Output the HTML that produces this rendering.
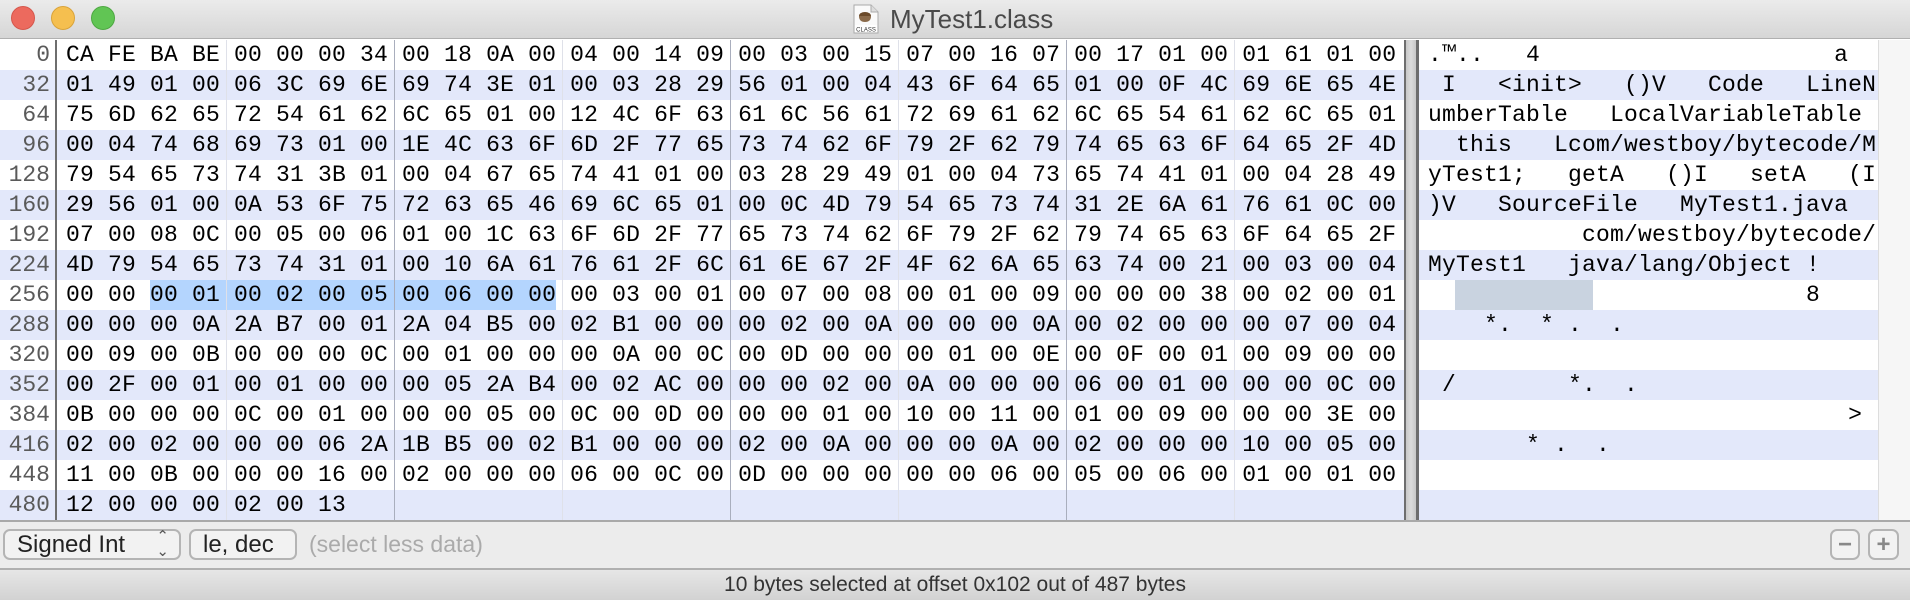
<!DOCTYPE html>
<html><head><meta charset="utf-8">
<style>
*{margin:0;padding:0;box-sizing:border-box}
html,body{width:1910px;height:600px;overflow:hidden;background:#fff;font-family:"Liberation Sans",sans-serif}
#title{position:absolute;left:0;top:0;width:1910px;height:39px;background:linear-gradient(#ebebeb,#d6d6d6);border-bottom:1px solid #b0b0b0}
.tl{position:absolute;top:6px;width:24px;height:24px;border-radius:50%}
#ttext{position:absolute;left:890px;top:4px;font-size:26px;color:#4a4a4a}
.row{position:absolute;left:0;width:1880px;height:30px}
.alt{background:#e3e8fa}
.ln{position:absolute;left:0;width:50px;text-align:right;font-family:"Liberation Mono",monospace;font-size:23px;color:#5a5a5a;line-height:30px}
.hx,.tx{position:absolute;font-family:"Liberation Mono",monospace;font-size:23px;letter-spacing:0.2px;line-height:30px;color:#000;white-space:pre}
.hx{left:66px}
.tx{left:1428px}
.sep{position:absolute;top:40px;height:480px;width:1px;background:#dfe1e9}
.sep.d{background:#a9aebd}
#gutb{position:absolute;left:55px;top:40px;width:2px;height:480px;background:#6e6e6e}
#split{position:absolute;left:1404px;top:40px;width:15px;height:480px;background:linear-gradient(90deg,#6e6e6e 0,#6e6e6e 2px,#c8c8c8 2px,#dcdcdc 7px,#c8c8c8 12px,#6e6e6e 12px,#6e6e6e 15px)}
#rstrip{position:absolute;left:1878px;top:40px;width:32px;height:480px;background:#f6f6f6;border-left:1px solid #ddd}
#ctl{position:absolute;left:0;top:520px;width:1910px;height:48px;background:#ececec;border-top:2px solid #a9a9a9}
#status{position:absolute;left:0;top:568px;width:1910px;height:32px;background:linear-gradient(#e6e6e6,#d2d2d2);border-top:2px solid #b0b0b0;text-align:center;font-size:21px;color:#333;line-height:30px}
.btn{position:absolute;top:7px;height:31px;border:2px solid #b4b4b4;border-radius:7px;background:#f2f2f2;font-size:24px;color:#222;line-height:27px;padding-left:12px}
</style></head><body>
<div id="title">
<div class="tl" style="left:11px;background:#ec6a5e;border:1px solid #d5574c"></div>
<div class="tl" style="left:51px;background:#f5bf4f;border:1px solid #d9a33a"></div>
<div class="tl" style="left:91px;background:#61c554;border:1px solid #4ea842"></div>
<svg style="position:absolute;left:853px;top:4px" width="26" height="30" viewBox="0 0 26 30"><path d="M1 1h17l7 7v21H1z" fill="#fafafa" stroke="#aaa"/><path d="M18 1v7h7" fill="#ddd" stroke="#aaa"/><ellipse cx="12" cy="12" rx="6" ry="4" fill="#6b4a2a"/><path d="M6 12q0 6 6 6t6-6" fill="#8a6a4a"/><rect x="2" y="21" width="22" height="7" fill="#fff"/><text x="13" y="27.5" font-size="6" text-anchor="middle" font-family="Liberation Sans" fill="#333">CLASS</text></svg>
<div id="ttext">MyTest1.class</div>
</div>

<div class="row" style="top:40px"><div class="ln">0</div></div>
<div class="row alt" style="top:70px"><div class="ln">32</div></div>
<div class="row" style="top:100px"><div class="ln">64</div></div>
<div class="row alt" style="top:130px"><div class="ln">96</div></div>
<div class="row" style="top:160px"><div class="ln">128</div></div>
<div class="row alt" style="top:190px"><div class="ln">160</div></div>
<div class="row" style="top:220px"><div class="ln">192</div></div>
<div class="row alt" style="top:250px"><div class="ln">224</div></div>
<div class="row" style="top:280px"><div class="ln">256</div></div>
<div class="row alt" style="top:310px"><div class="ln">288</div></div>
<div class="row" style="top:340px"><div class="ln">320</div></div>
<div class="row alt" style="top:370px"><div class="ln">352</div></div>
<div class="row" style="top:400px"><div class="ln">384</div></div>
<div class="row alt" style="top:430px"><div class="ln">416</div></div>
<div class="row" style="top:460px"><div class="ln">448</div></div>
<div class="row alt" style="top:490px"><div class="ln">480</div></div>

<div style="position:absolute;left:150px;top:280px;width:406px;height:30px;background:#b4d5fe"></div>
<div style="position:absolute;left:1455px;top:280px;width:138px;height:30px;background:#c9d3e0"></div>

<div class="sep" style="left:226px"></div>
<div class="sep d" style="left:394px"></div>
<div class="sep" style="left:562px"></div>
<div class="sep d" style="left:730px"></div>
<div class="sep" style="left:898px"></div>
<div class="sep d" style="left:1066px"></div>
<div class="sep" style="left:1234px"></div>

<div class="hx" style="top:40px">CA FE BA BE 00 00 00 34 00 18 0A 00 04 00 14 09 00 03 00 15 07 00 16 07 00 17 01 00 01 61 01 00</div>
<div class="hx" style="top:70px">01 49 01 00 06 3C 69 6E 69 74 3E 01 00 03 28 29 56 01 00 04 43 6F 64 65 01 00 0F 4C 69 6E 65 4E</div>
<div class="hx" style="top:100px">75 6D 62 65 72 54 61 62 6C 65 01 00 12 4C 6F 63 61 6C 56 61 72 69 61 62 6C 65 54 61 62 6C 65 01</div>
<div class="hx" style="top:130px">00 04 74 68 69 73 01 00 1E 4C 63 6F 6D 2F 77 65 73 74 62 6F 79 2F 62 79 74 65 63 6F 64 65 2F 4D</div>
<div class="hx" style="top:160px">79 54 65 73 74 31 3B 01 00 04 67 65 74 41 01 00 03 28 29 49 01 00 04 73 65 74 41 01 00 04 28 49</div>
<div class="hx" style="top:190px">29 56 01 00 0A 53 6F 75 72 63 65 46 69 6C 65 01 00 0C 4D 79 54 65 73 74 31 2E 6A 61 76 61 0C 00</div>
<div class="hx" style="top:220px">07 00 08 0C 00 05 00 06 01 00 1C 63 6F 6D 2F 77 65 73 74 62 6F 79 2F 62 79 74 65 63 6F 64 65 2F</div>
<div class="hx" style="top:250px">4D 79 54 65 73 74 31 01 00 10 6A 61 76 61 2F 6C 61 6E 67 2F 4F 62 6A 65 63 74 00 21 00 03 00 04</div>
<div class="hx" style="top:280px">00 00 00 01 00 02 00 05 00 06 00 00 00 03 00 01 00 07 00 08 00 01 00 09 00 00 00 38 00 02 00 01</div>
<div class="hx" style="top:310px">00 00 00 0A 2A B7 00 01 2A 04 B5 00 02 B1 00 00 00 02 00 0A 00 00 00 0A 00 02 00 00 00 07 00 04</div>
<div class="hx" style="top:340px">00 09 00 0B 00 00 00 0C 00 01 00 00 00 0A 00 0C 00 0D 00 00 00 01 00 0E 00 0F 00 01 00 09 00 00</div>
<div class="hx" style="top:370px">00 2F 00 01 00 01 00 00 00 05 2A B4 00 02 AC 00 00 00 02 00 0A 00 00 00 06 00 01 00 00 00 0C 00</div>
<div class="hx" style="top:400px">0B 00 00 00 0C 00 01 00 00 00 05 00 0C 00 0D 00 00 00 01 00 10 00 11 00 01 00 09 00 00 00 3E 00</div>
<div class="hx" style="top:430px">02 00 02 00 00 00 06 2A 1B B5 00 02 B1 00 00 00 02 00 0A 00 00 00 0A 00 02 00 00 00 10 00 05 00</div>
<div class="hx" style="top:460px">11 00 0B 00 00 00 16 00 02 00 00 00 06 00 0C 00 0D 00 00 00 00 00 06 00 05 00 06 00 01 00 01 00</div>
<div class="hx" style="top:490px">12 00 00 00 02 00 13</div>

<div class="tx" style="top:40px">.™..   4                     a</div>
<div class="tx" style="top:70px"> I   &lt;init&gt;   ()V   Code   LineN</div>
<div class="tx" style="top:100px">umberTable   LocalVariableTable</div>
<div class="tx" style="top:130px">  this   Lcom/westboy/bytecode/M</div>
<div class="tx" style="top:160px">yTest1;   getA   ()I   setA   (I</div>
<div class="tx" style="top:190px">)V   SourceFile   MyTest1.java</div>
<div class="tx" style="top:220px">           com/westboy/bytecode/</div>
<div class="tx" style="top:250px">MyTest1   java/lang/Object !</div>
<div class="tx" style="top:280px">                           8</div>
<div class="tx" style="top:310px">    *.  * .  .</div>
<div class="tx" style="top:370px"> /        *.  .</div>
<div class="tx" style="top:400px">                              &gt;</div>
<div class="tx" style="top:430px">       * .  .</div>

<div id="gutb"></div>
<div id="split"></div>
<div id="rstrip"></div>

<div id="ctl">
<div class="btn" style="left:3px;width:178px">Signed Int<span style="position:absolute;right:10px;top:-2px;font-size:15px;color:#555;line-height:15px">&#8963;<br>&#8964;</span></div>
<div class="btn" style="left:189px;width:108px">le, dec</div>
<div style="position:absolute;left:309px;top:7px;font-size:23px;color:#aaa;line-height:31px">(select less data)</div>
<div class="btn" style="left:1830px;width:30px;padding:0;text-align:center;font-size:24px;color:#888;font-weight:bold">&#8722;</div>
<div class="btn" style="left:1868px;width:31px;padding:0;text-align:center;font-size:24px;color:#888;font-weight:bold">+</div>
</div>
<div id="status">10 bytes selected at offset 0x102 out of 487 bytes</div>
</body></html>
